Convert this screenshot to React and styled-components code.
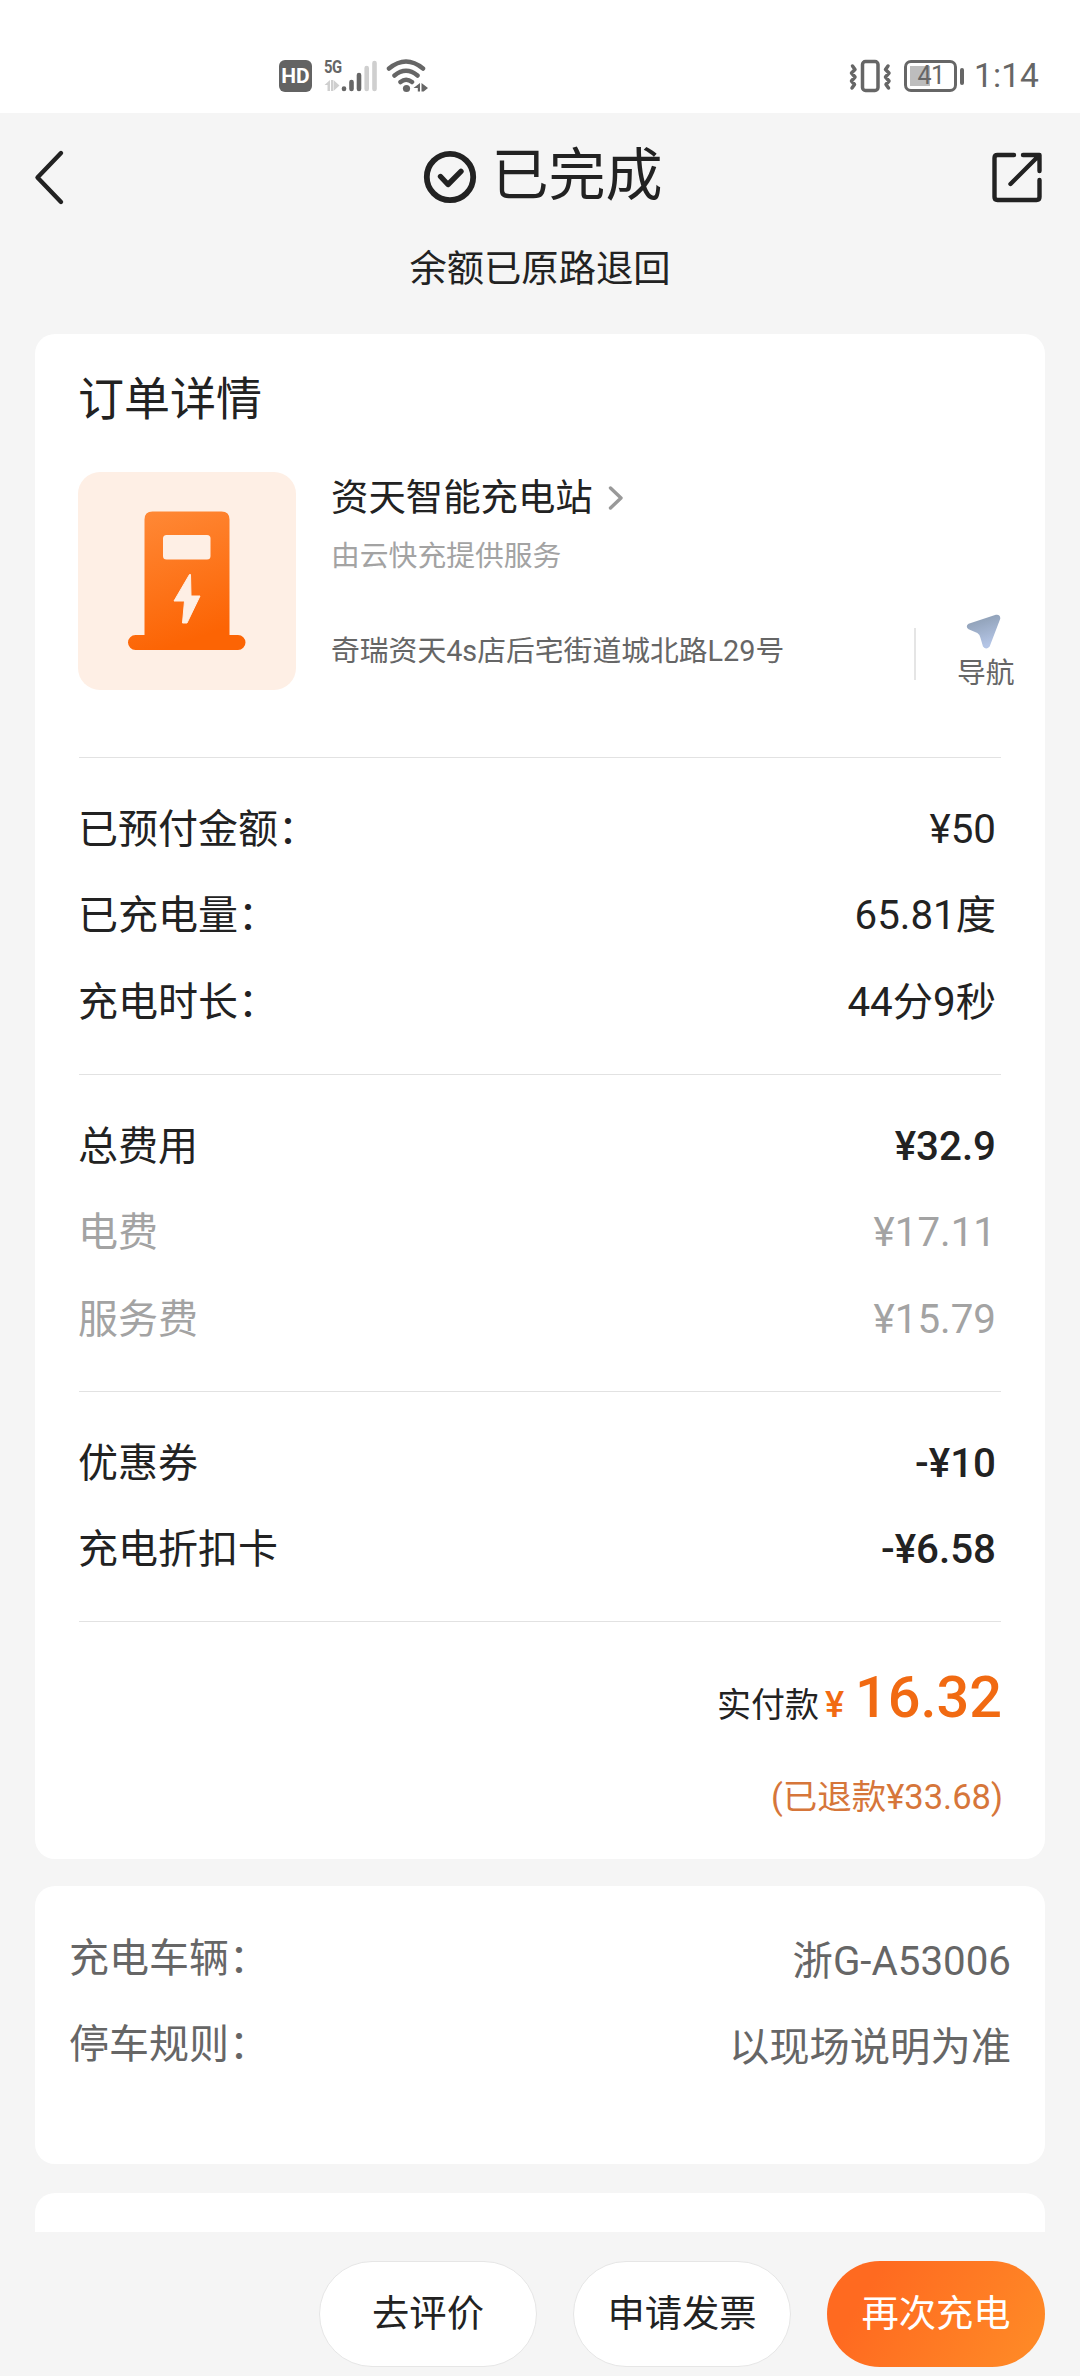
import React from "react";
import styled, { createGlobalStyle } from "styled-components";

const GlobalStyle = createGlobalStyle`
  * { box-sizing: border-box; }
  html, body { margin: 0; padding: 0; background: #f5f5f5; }
  body { font-family: Roboto, "Noto Sans CJK SC", sans-serif; color: #222; }
`;

const Screen = styled.div`
  width: 1080px;
  height: 2376px;
  display: flex;
  flex-direction: column;
  background: #f5f5f5;
  overflow: hidden;
`;

const StatusBar = styled.header`
  height: 113px;
  flex: none;
  padding: 36px 41px 0 279px;
  background: #fff;
  display: flex;
  justify-content: space-between;
  align-items: flex-start;
  color: #666;
`;

const StatusGroup = styled.div`
  display: flex;
  align-items: center;
  height: 80px;
`;

const HdBadge = styled.span`
  width: 33px;
  height: 32px;
  border-radius: 6px;
  background: #636363;
  color: #fff;
  font: 700 21px/33px Roboto, sans-serif;
  text-align: center;
`;

const Signal = styled.div`
  position: relative;
  width: 54px;
  height: 40px;
  margin-left: 12px;
`;

const NetworkLabel = styled.span`
  position: absolute;
  left: 0;
  top: 0;
  font: 700 19px/22px Roboto, sans-serif;
  letter-spacing: -0.5px;
  transform: scaleX(0.78);
  transform-origin: 0 0;
`;

const SignalIcon = styled.svg`
  display: block;
  width: 54px;
  height: 36px;
  margin-top: 2px;
`;

const WifiIcon = styled.svg`
  width: 42px;
  height: 36px;
  margin-left: 8px;
`;

const VibrateIcon = styled.svg`
  width: 44px;
  height: 36px;
`;

const Battery = styled.div`
  display: flex;
  align-items: center;
  margin: 0 10px 0 11px;
`;

const BatteryBody = styled.div`
  width: 53px;
  height: 32px;
  border: 3px solid #666;
  border-radius: 7px;
  padding-left: 1px;
  font: 400 25px/26px Roboto, sans-serif;
  letter-spacing: -0.6px;
  text-align: center;
  background: linear-gradient(#bdbdbd, #bdbdbd) 3px 3px / 20px 20px no-repeat;
`;

const BatteryTip = styled.div`
  width: 4px;
  height: 17px;
  margin-left: 3px;
  border-radius: 2px;
  background: #666;
`;

const Clock = styled.time`
  font-size: 33.5px;
  line-height: 40px;
  letter-spacing: 0.1px;
`;

const NavBar = styled.nav`
  flex: none;
  height: 128px;
  padding: 0 36px 0 31px;
  display: flex;
  align-items: center;
  justify-content: space-between;
`;

const BackIcon = styled.svg`
  width: 60px;
  height: 60px;
`;

const TitleGroup = styled.h1`
  display: flex;
  align-items: center;
  margin: 0 0 0 2px;
  gap: 15px;
  font-weight: 400;
  font-size: 57px;
  line-height: 70px;
`;

const TitleText = styled.span`
  padding-bottom: 3px;
`;

const CheckIcon = styled.svg`
  width: 54px;
  height: 54px;
`;

const ShareIcon = styled.svg`
  width: 52px;
  height: 52px;
`;

const Subtitle = styled.p`
  flex: none;
  margin: 0;
  height: 93px;
  padding-top: 2px;
  text-align: center;
  font-size: 37.3px;
  line-height: 52px;
`;

const Card = styled.section`
  flex: none;
  width: 1010px;
  height: ${(p) => p.$h}px;
  margin: 0 35px ${(p) => p.$gap}px;
  padding: ${(p) => p.$pad || "0"};
  background: #fff;
  border-radius: ${(p) => (p.$cut ? "20px 20px 0 0" : "20px")};
`;

const CardTitle = styled.h2`
  margin: 0 0 0 -1px;
  height: 103px;
  font-weight: 400;
  font-size: 46px;
  line-height: 60px;
`;

const Station = styled.div`
  display: flex;
  height: 285px;
  margin: 0 -44px 0 -1px;
`;

const StationPicture = styled.svg`
  width: 218px;
  height: 218px;
  flex: none;
  border-radius: 22px;
  background: #feefe5;
`;

const StationInfo = styled.div`
  flex: 1;
  margin-left: 35px;
  display: flex;
  flex-direction: column;
`;

const StationName = styled.div`
  display: flex;
  align-items: center;
  gap: 15px;
  height: 52px;
  font-size: 37.4px;
  line-height: 52px;
`;

const Chevron = styled.svg`
  width: 16px;
  height: 26px;
`;

const Provider = styled.div`
  margin-top: 12px;
  font-size: 28.8px;
  line-height: 40px;
  color: #a3a3a3;
`;

const Address = styled.div`
  margin-top: 55px;
  font-size: 28.8px;
  line-height: 40px;
  color: #666;
`;

const NavColumn = styled.button`
  align-self: flex-start;
  width: 131px;
  margin-top: 141px;
  padding: 0;
  border: 0;
  background: none;
  display: flex;
  align-items: center;
  font: inherit;
  color: #666;
`;

const NavRule = styled.span`
  width: 2px;
  height: 52px;
  margin-top: 1px;
  background: #e5e5e5;
`;

const NavLabel = styled.span`
  margin-left: 41px;
  display: flex;
  flex-direction: column;
  align-items: center;
  gap: 3px;
  font-size: 28.8px;
  line-height: 40px;
`;

const ArrowIcon = styled.svg`
  width: 37px;
  height: 37px;
  margin-right: 4px;
`;

const Section = styled.div`
  width: 922px;
  height: ${(p) => p.$h}px;
  border-top: 1.4px solid #e2e2e2;
  padding: 29px 5px 0 0;
`;

const Row = styled.div`
  display: flex;
  justify-content: space-between;
  height: 86.4px;
  font-size: 40px;
  line-height: 86.4px;
  color: ${(p) => p.$color || "#222"};
`;

const RowLabel = styled.span`
  margin-left: -1px;
`;

const Value = styled.span`
  font-size: 40.3px;
  font-weight: ${(p) => (p.$strong ? 500 : 400)};
  padding-top: ${(p) => p.$drop || 0}px;
`;

const Paid = styled.div`
  display: flex;
  justify-content: flex-end;
  align-items: baseline;
  margin: 2px -6px 0 0;
  font-size: 34px;
  line-height: 90px;
`;

const Currency = styled.span`
  margin: 0 11px 0 6px;
  font-size: 36px;
  font-weight: 500;
  color: #f16a12;
`;

const Amount = styled.strong`
  font-size: 57.6px;
  font-weight: 500;
  color: #f16a12;
`;

const Refund = styled.div`
  margin: 7px -7px 0 0;
  text-align: right;
  font-size: 34.5px;
  line-height: 80px;
  color: #d6763a;
`;

const Footer = styled.footer`
  flex: 1;
  padding: 29px 35px 0;
  display: flex;
  justify-content: flex-end;
  gap: 36px;
`;

const Button = styled.button`
  width: 218px;
  height: 106px;
  padding: 0;
  border-radius: 53px;
  border: ${(p) => (p.$primary ? "0" : "1px solid #e6e6e6")};
  background: ${(p) => (p.$primary ? "linear-gradient(120deg, #ff6a20 20%, #ff8826 90%)" : "#fff")};
  color: ${(p) => (p.$primary ? "#fff" : "#222")};
  font: 400 37.3px/104px Roboto, "Noto Sans CJK SC", sans-serif;
`;

const sections = [
  {
    h: 317,
    rows: [
      { label: "已预付金额：", value: "¥50" },
      { label: "已充电量：", value: "65.81度" },
      { label: "充电时长：", value: "44分9秒" },
    ],
  },
  {
    h: 317,
    rows: [
      { label: "总费用", value: "¥32.9", strong: true },
      { label: "电费", value: "¥17.11", color: "#a3a3a3" },
      { label: "服务费", value: "¥15.79", color: "#a3a3a3" },
    ],
  },
  {
    h: 230,
    rows: [
      { label: "优惠券", value: "-¥10", strong: true },
      { label: "充电折扣卡", value: "-¥6.58", strong: true },
    ],
  },
];

const vehicleRows = [
  { label: "充电车辆：", value: "浙G-A53006" },
  { label: "停车规则：", value: "以现场说明为准" },
];

export default function App() {
  return (
    <Screen lang="zh-CN">
      <GlobalStyle />
      <StatusBar>
        <StatusGroup>
          <HdBadge>HD</HdBadge>
          <Signal>
            <NetworkLabel>5G</NetworkLabel>
            <SignalIcon viewBox="0 0 54 36">
              <path d="M6 22v11H3.500v-6H.5zM9 22v11h-2V22zM9.500 22l6 5.500-6 5.500z" fill="#cfcfcf" />
              <g strokeWidth="4.600" strokeLinecap="round">
                <path d="M20 30.500v.5M27.500 24v7M35 17v14" stroke="#666" />
                <path d="M42.700 10v21M50.500 5v26" stroke="#cfcfcf" />
              </g>
            </SignalIcon>
          </Signal>
          <WifiIcon viewBox="0 0 42 36">
            <g fill="none" stroke="#666" strokeWidth="4.500" strokeLinecap="round">
              <path d="M3 10.500Q20 -3.500 37 10.500M8.500 17.500Q20 8 31.500 17.500M14.500 24Q20 19.500 26 24" />
            </g>
            <circle cx="20.500" cy="30.500" r="3.600" fill="#666" />
            <path d="M34 25v8.500h-2.200v-3.500H27.500zM35.500 25l6.500 5-4.300 3.500H35.500z" fill="#666" />
          </WifiIcon>
        </StatusGroup>
        <StatusGroup>
          <VibrateIcon viewBox="0 0 44 36">
            <g fill="none" stroke="#666" strokeWidth="3.500" strokeLinecap="round" strokeLinejoin="round">
              <rect x="13.500" y="3.500" width="15.500" height="29" rx="3" />
              <path d="M3.500 8l2.500 3.500L2.500 15l3.500 4L2.500 23l3 3.500L3 30M39 8L36.500 11.500l3.500 3.500-3.500 4 3.500 4-3 3.500L39.500 30" />
            </g>
          </VibrateIcon>
          <Battery>
            <BatteryBody>41</BatteryBody>
            <BatteryTip />
          </Battery>
          <Clock>1:14</Clock>
        </StatusGroup>
      </StatusBar>

      <NavBar>
        <BackIcon viewBox="0 0 60 60">
          <path d="M30 6L6.500 30.500L30 55" fill="none" stroke="#222" strokeWidth="4.400" strokeLinecap="round" strokeLinejoin="round" />
        </BackIcon>
        <TitleGroup>
          <CheckIcon viewBox="0 0 54 54">
            <g fill="none" stroke="#222" strokeLinecap="round" strokeLinejoin="round">
              <circle cx="27" cy="27" r="23.200" strokeWidth="5.800" />
              <path d="M17.500 26.500l7.500 8L38 21.300" strokeWidth="5.400" />
            </g>
          </CheckIcon>
          <TitleText>已完成</TitleText>
        </TitleGroup>
        <ShareIcon viewBox="0 0 52 52">
          <g fill="none" stroke="#222" strokeWidth="4.400" strokeLinecap="round" strokeLinejoin="round">
            <path d="M22 4H5.500Q2.500 4 2.500 7V46Q2.500 49 5.500 49H44.500Q47.500 49 47.500 46V29" />
            <path d="M31 4H47.500V20M46.500 5L18.500 33" />
          </g>
        </ShareIcon>
      </NavBar>
      <Subtitle>余额已原路退回</Subtitle>

      <Card $h={1525} $gap={27} $pad="35px 44px 0">
        <CardTitle>订单详情</CardTitle>
        <Station>
          <StationPicture viewBox="0 0 218 218">
            <defs>
              <linearGradient id="pump" x1="0" y1="0" x2="0.3" y2="1">
                <stop offset="0" stopColor="#ff8a38" />
                <stop offset="1" stopColor="#fc6404" />
              </linearGradient>
            </defs>
            <path d="M74.500 39.500h69q8 0 8 8V163H160a7.500 7.500 0 0 1 0 15H57.500a7.500 7.500 0 0 1 0-15H66.500V47.500q0-8 8-8z" fill="url(#pump)" />
            <rect x="85" y="63" width="47.500" height="24.500" rx="3.500" fill="#feefe5" />
            <path d="M111.500 102.500L96 129h10.500l-2 22h4.500l13-27h-9l-.5-21.500z" fill="#feefe5" stroke="#feefe5" strokeLinejoin="round" />
          </StationPicture>
          <StationInfo>
            <StationName>
              资天智能充电站
              <Chevron viewBox="0 0 16 26">
                <path d="M2.500 3L13 13L2.500 23" fill="none" stroke="#999" strokeWidth="3.400" strokeLinecap="round" strokeLinejoin="round" />
              </Chevron>
            </StationName>
            <Provider>由云快充提供服务</Provider>
            <Address>奇瑞资天4s店后宅街道城北路L29号</Address>
          </StationInfo>
          <NavColumn>
            <NavRule />
            <NavLabel>
              <ArrowIcon viewBox="0 0 36 36">
                <defs>
                  <linearGradient id="arrow" x1="0" y1="0" x2="0.3" y2="1">
                    <stop offset="0" stopColor="#8798ac" />
                    <stop offset="1" stopColor="#b4c5e6" />
                  </linearGradient>
                </defs>
                <path d="M3.500 10.500Q0 13 3.500 15.800L12 19.500Q14.500 21 15 24L17.500 32.500Q20.500 36.500 24 32.500L34.300 5.500Q34.500 1 30 1.700z" fill="url(#arrow)" />
              </ArrowIcon>
              导航
            </NavLabel>
          </NavColumn>
        </Station>
        {sections.map((s, i) => (
          <Section key={i} $h={s.h}>
            {s.rows.map((r) => (
              <Row key={r.label} $color={r.color}>
                <RowLabel>{r.label}</RowLabel>
                <Value $strong={r.strong}>{r.value}</Value>
              </Row>
            ))}
          </Section>
        ))}
        <Section $h={237}>
          <Paid>
            实付款<Currency>¥</Currency><Amount>16.32</Amount>
          </Paid>
          <Refund>(已退款¥33.68)</Refund>
        </Section>
      </Card>

      <Card $h={278} $gap={29} $pad="30px 34px 0 35px">
        {vehicleRows.map((r) => (
          <Row key={r.label} $color="#666">
            <RowLabel>{r.label}</RowLabel>
            <Value $drop={3}>{r.value}</Value>
          </Row>
        ))}
      </Card>

      <Card $h={39} $gap={0} $cut />

      <Footer>
        <Button>去评价</Button>
        <Button>申请发票</Button>
        <Button $primary>再次充电</Button>
      </Footer>
    </Screen>
  );
}
